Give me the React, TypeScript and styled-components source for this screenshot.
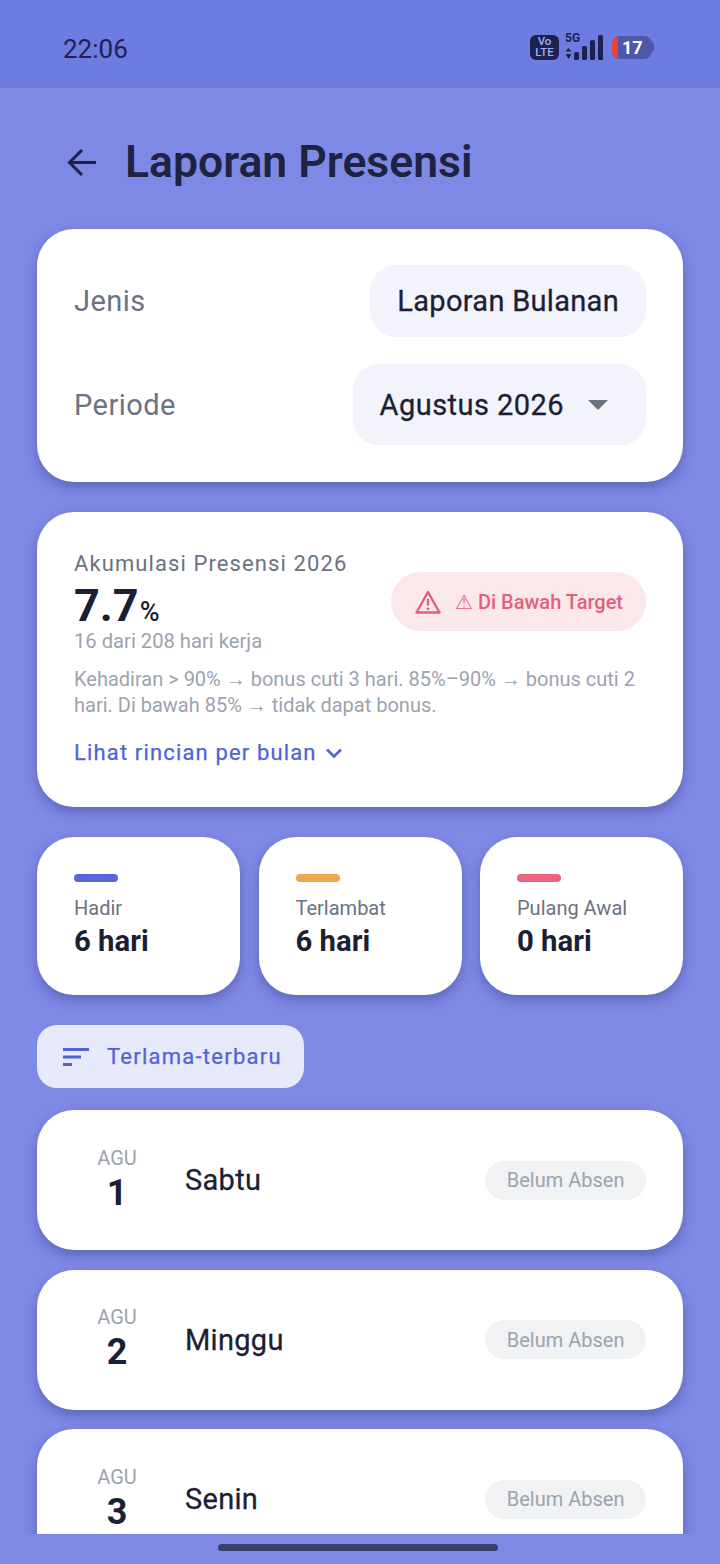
import React from 'react';
import styled, { createGlobalStyle } from 'styled-components';

const days = [
  { month: 'AGU', day: 1, name: 'Sabtu' },
  { month: 'AGU', day: 2, name: 'Minggu' },
  { month: 'AGU', day: 3, name: 'Senin' },
];

const stats = [
  { label: 'Hadir', value: '6 hari', color: '#5468dc' },
  { label: 'Terlambat', value: '6 hari', color: '#efa64e' },
  { label: 'Pulang Awal', value: '0 hari', color: '#ec6480' },
];

const App = () => {
  return (
    <Screen>
      <GlobalStyle />
      <StatusBar>
        <Clock>22:06</Clock>
        <StatusIcons>
          <VoLte>
            <span>Vo</span>
            <span>LTE</span>
          </VoLte>
          <Network>
            <NetLabel>5G</NetLabel>
            <svg width="38" height="26" viewBox="0 0 38 26">
              <path d="M3.5 14 L6.5 17.5 H0.5 Z M3.5 25 L6.5 20 H0.5 Z" fill="#1e2250" />
              <rect x="9" y="18" width="5" height="8" rx="1.5" fill="#1e2250" />
              <rect x="17" y="12" width="5" height="14" rx="1.5" fill="#1e2250" />
              <rect x="25" y="6" width="5" height="20" rx="1.5" fill="#1e2250" />
              <rect x="33" y="1" width="5" height="25" rx="1.5" fill="#1e2250" />
            </svg>
          </Network>
          <Battery>
            <BatteryBody>
              <BatteryLevel />
              <BatteryText>17</BatteryText>
            </BatteryBody>
            <BatteryCap />
          </Battery>
        </StatusIcons>
      </StatusBar>

      <Content>
        <Header>
          <BackIcon width="32" height="32" viewBox="0 0 32 32" fill="none">
            <path d="M30 16.5H4M16 4L3.5 16.5L16 29" stroke="#1e2145" strokeWidth="3" />
          </BackIcon>
          <Title>Laporan Presensi</Title>
        </Header>

        <FilterCard>
          <FilterRow>
            <FilterLabel>Jenis</FilterLabel>
            <ReportChip>Laporan Bulanan</ReportChip>
          </FilterRow>
          <FilterRow>
            <FilterLabel>Periode</FilterLabel>
            <PeriodChip>
              Agustus 2026
              <Caret />
            </PeriodChip>
          </FilterRow>
        </FilterCard>

        <SummaryCard>
          <SummaryTop>
            <div>
              <SummaryTitle>Akumulasi Presensi 2026</SummaryTitle>
              <Percent>
                7.7<PercentSign>%</PercentSign>
              </Percent>
              <SummarySub>16 dari 208 hari kerja</SummarySub>
            </div>
            <WarningPill>
              <svg width="26" height="24" viewBox="0 0 26 24" fill="none">
                <path d="M13 2 L24.5 22.5 H1.5 Z" stroke="#e2607c" strokeWidth="2.4" strokeLinejoin="round" />
                <path d="M13 9V15.5" stroke="#e2607c" strokeWidth="2.4" />
                <circle cx="13" cy="18.8" r="1.4" fill="#e2607c" />
              </svg>
              <WarningText>⚠ Di Bawah Target</WarningText>
            </WarningPill>
          </SummaryTop>
          <SummaryNote>
            Kehadiran &gt; 90% → bonus cuti 3 hari. 85%–90% → bonus cuti 2 hari. Di bawah 85% → tidak dapat bonus.
          </SummaryNote>
          <DetailLink>
            Lihat rincian per bulan
            <svg width="18" height="12" viewBox="0 0 18 12" fill="none">
              <path d="M2 2.5L9 9.5L16 2.5" stroke="#4f63d6" strokeWidth="2.6" />
            </svg>
          </DetailLink>
        </SummaryCard>

        <StatGrid>
          {stats.map((stat) => (
            <StatCard key={stat.label}>
              <StatBar $color={stat.color} />
              <StatLabel>{stat.label}</StatLabel>
              <StatValue>{stat.value}</StatValue>
            </StatCard>
          ))}
        </StatGrid>

        <SortButton>
          <svg width="28" height="20" viewBox="0 0 28 20" fill="#5063d6">
            <rect x="1" y="1" width="26" height="3" />
            <rect x="1" y="8.5" width="18" height="3" />
            <rect x="1" y="16" width="9" height="3" />
          </svg>
          Terlama-terbaru
        </SortButton>

        <DayList>
          {days.map((item) => (
            <DayCard key={item.day}>
              <DateBlock>
                <DateMonth>{item.month}</DateMonth>
                <DateDay>{item.day}</DateDay>
              </DateBlock>
              <DayName>{item.name}</DayName>
              <StatusPill>Belum Absen</StatusPill>
            </DayCard>
          ))}
        </DayList>
      </Content>

      <NavBar>
        <HomeIndicator />
      </NavBar>
    </Screen>
  );
};

const GlobalStyle = createGlobalStyle`
  html, body {
    margin: 0;
    padding: 0;
    background: #7e89e5;
  }
  * {
    box-sizing: border-box;
  }
`;

const Screen = styled.div`
  width: 720px;
  height: 1564px;
  display: flex;
  flex-direction: column;
  overflow: hidden;
  background: #7e89e5;
  font-family: Roboto, "Liberation Sans", sans-serif;
  color: #1c1f33;
`;

const StatusBar = styled.div`
  flex: 0 0 88px;
  display: flex;
  align-items: center;
  justify-content: space-between;
  padding: 20px 66px 14px 63px;
  background: #6e7be0;
`;

const Clock = styled.span`
  margin-top: 4px;
  font-size: 26px;
  color: #1e2250;
`;

const StatusIcons = styled.div`
  display: flex;
  align-items: center;
  gap: 6px;
`;

const VoLte = styled.div`
  width: 29px;
  height: 25px;
  border-radius: 6px;
  display: flex;
  flex-direction: column;
  align-items: center;
  justify-content: center;
  background: #1e2250;
  color: #a2abf2;
  font-size: 11.5px;
  font-weight: 500;
  line-height: 11px;
`;

const Network = styled.div`
  position: relative;
  width: 38px;
  height: 26px;
`;

const NetLabel = styled.span`
  position: absolute;
  left: 0;
  top: -2px;
  font-size: 12px;
  font-weight: 700;
  line-height: 12px;
  color: #1e2250;
`;

const Battery = styled.div`
  margin-left: 3px;
  display: flex;
  align-items: center;
`;

const BatteryBody = styled.div`
  width: 40px;
  height: 23px;
  display: flex;
  align-items: center;
  overflow: hidden;
  border-radius: 8px;
  background: #4f58a8;
`;

const BatteryLevel = styled.div`
  width: 6px;
  height: 23px;
  background: #f23f30;
`;

const BatteryText = styled.span`
  margin-left: 4px;
  font-size: 18px;
  font-weight: 700;
  color: #ffffff;
`;

const BatteryCap = styled.div`
  width: 2px;
  height: 10px;
  border-radius: 0 2px 2px 0;
  background: #4f58a8;
`;

const Content = styled.main`
  flex: 1;
  min-height: 0;
  overflow: hidden;
  display: flex;
  flex-direction: column;
  padding: 0 37px;
`;

const Header = styled.header`
  flex: none;
  height: 141px;
  display: flex;
  align-items: center;
  gap: 27px;
  padding: 8px 0 0 29px;
`;

const BackIcon = styled.svg`
  flex: none;
  margin-top: -2px;
`;

const Title = styled.h1`
  margin: 0;
  font-size: 44.5px;
  font-weight: 600;
  line-height: 1;
  color: #1f2240;
`;

const Card = styled.section`
  flex: none;
  background: #ffffff;
  border-radius: 37px;
  box-shadow: 0 5px 12px rgba(40, 46, 120, 0.38);
`;

const FilterCard = styled(Card)`
  height: 253px;
  padding: 36px 37px;
  display: flex;
  flex-direction: column;
  gap: 27px;
`;

const FilterRow = styled.div`
  display: flex;
  align-items: center;
  justify-content: space-between;
`;

const FilterLabel = styled.span`
  font-size: 29px;
  letter-spacing: 0.45px;
  color: #6b7280;
`;

const ReportChip = styled.div`
  height: 72px;
  display: flex;
  align-items: center;
  padding: 0 27px;
  border-radius: 26px;
  background: #f2f3fb;
  font-size: 29px;
  letter-spacing: 0.3px;
  -webkit-text-stroke: 0.3px #1c1f33;
`;

const PeriodChip = styled(ReportChip)`
  height: 81px;
  gap: 24px;
  padding: 0 38px 0 27px;
  letter-spacing: 0.45px;
`;

const Caret = styled.span`
  width: 0;
  height: 0;
  border-left: 10px solid transparent;
  border-right: 10px solid transparent;
  border-top: 10px solid #6b7280;
`;

const SummaryCard = styled(Card)`
  height: 295px;
  margin-top: 30px;
  padding: 37px;
`;

const SummaryTop = styled.div`
  display: flex;
  align-items: center;
  justify-content: space-between;
`;

const SummaryTitle = styled.div`
  margin-top: 1px;
  font-size: 22px;
  line-height: 28px;
  letter-spacing: 1.1px;
  color: #6b7280;
`;

const Percent = styled.div`
  margin-top: 2px;
  font-size: 45px;
  font-weight: 700;
  line-height: 52px;
`;

const PercentSign = styled.span`
  margin-left: 1px;
  font-size: 27px;
  font-weight: 500;
`;

const SummarySub = styled.div`
  margin-top: -9px;
  font-size: 20.2px;
  line-height: 25px;
  color: #9ca3af;
`;

const WarningPill = styled.div`
  width: 255px;
  height: 59px;
  margin-top: 0;
  display: flex;
  align-items: center;
  gap: 14px;
  padding-left: 24px;
  border-radius: 30px;
  background: #fbe8eb;
`;

const WarningText = styled.span`
  font-size: 20px;
  font-weight: 500;
  white-space: nowrap;
  color: #e2607c;
`;

const SummaryNote = styled.p`
  margin: 12px 0 0;
  font-size: 20px;
  line-height: 26px;
  color: #9ca3af;
`;

const DetailLink = styled.div`
  margin-top: 22px;
  display: flex;
  align-items: center;
  gap: 8px;
  font-size: 22px;
  letter-spacing: 1.15px;
  -webkit-text-stroke: 0.25px #4f63d6;
  color: #4f63d6;
`;

const StatGrid = styled.div`
  flex: none;
  margin-top: 30px;
  display: grid;
  grid-template-columns: repeat(3, 1fr);
  gap: 18.5px;
`;

const StatCard = styled(Card)`
  height: 158px;
  padding: 37px 37px 0;
`;

const StatBar = styled.div<{ $color: string }>`
  width: 44px;
  height: 8px;
  border-radius: 4px;
  background: ${(props) => props.$color};
`;

const StatLabel = styled.div`
  margin-top: 13px;
  font-size: 20px;
  line-height: 26px;
  color: #6b7280;
`;

const StatValue = styled.div`
  margin-top: 3px;
  font-size: 29.3px;
  font-weight: 700;
  line-height: 34px;
`;

const SortButton = styled.button`
  flex: none;
  align-self: flex-start;
  width: 267px;
  height: 63px;
  margin-top: 30px;
  display: flex;
  align-items: center;
  gap: 17px;
  padding: 0 0 0 25px;
  border: none;
  border-radius: 20px;
  background: #e7eafb;
  font-family: inherit;
  font-size: 22px;
  letter-spacing: 1.25px;
  -webkit-text-stroke: 0.25px #5063d6;
  color: #5063d6;
`;

const DayList = styled.div`
  flex: none;
  margin-top: 22px;
  display: flex;
  flex-direction: column;
  gap: 19.5px;
`;

const DayCard = styled(Card)`
  height: 140px;
  display: flex;
  align-items: center;
  padding: 0 37px;
`;

const DateBlock = styled.div`
  width: 86px;
  display: flex;
  flex-direction: column;
  align-items: center;
  padding-bottom: 2px;
`;

const DateMonth = styled.span`
  margin: -1px 0 2px;
  font-size: 20px;
  line-height: 26px;
  color: #9ca3af;
`;

const DateDay = styled.span`
  font-size: 36px;
  font-weight: 700;
  line-height: 40px;
`;

const DayName = styled.span`
  margin-left: 25px;
  flex: 1;
  font-size: 29px;
  letter-spacing: 0.3px;
  -webkit-text-stroke: 0.3px #1c1f33;
`;

const StatusPill = styled.span`
  height: 39px;
  display: flex;
  align-items: center;
  padding: 0 21.5px;
  border-radius: 20px;
  background: #f0f2f4;
  font-size: 20px;
  color: #9ca3af;
`;

const NavBar = styled.footer`
  flex: 0 0 30px;
  display: flex;
  justify-content: center;
  padding-top: 10px;
`;

const HomeIndicator = styled.div`
  width: 280px;
  height: 7px;
  margin-left: -4px;
  border-radius: 4px;
  background: #3a3f70;
`;

export default App;
